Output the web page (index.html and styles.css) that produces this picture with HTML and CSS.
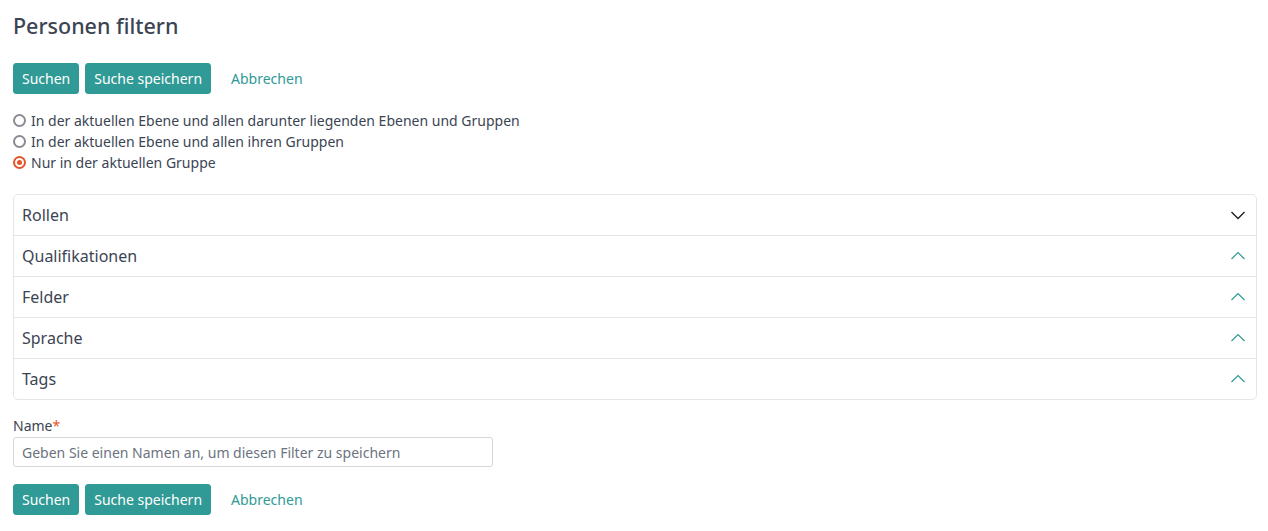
FILE: index.html
```html
<!DOCTYPE html>
<html lang="de">
<head>
<meta charset="utf-8">
<title>Personen filtern</title>
<link rel="stylesheet" href="styles.css">
</head>
<body>
<main class="page">
  <h1 class="title">Personen filtern</h1>
  <div class="actions">
    <button class="btn">Suchen</button>
    <button class="btn">Suche speichern</button>
    <a class="link" href="#">Abbrechen</a>
  </div>
  <div class="radios">
    <label class="radio"><span class="dot"></span>In der aktuellen Ebene und allen darunter liegenden Ebenen und Gruppen</label>
    <label class="radio"><span class="dot"></span>In der aktuellen Ebene und allen ihren Gruppen</label>
    <label class="radio"><span class="dot checked"></span>Nur in der aktuellen Gruppe</label>
  </div>
  <div class="accordion">
    <div class="acc-item"><span>Rollen</span>
      <svg class="chev dark" width="16" height="16" viewBox="0 0 16 16"><path d="M1.5 5 L8 11.5 L14.5 5" fill="none" stroke="currentColor" stroke-width="1.3"/></svg></div>
    <div class="acc-item"><span>Qualifikationen</span>
      <svg class="chev" width="16" height="16" viewBox="0 0 16 16"><path d="M1.5 11 L8 4.5 L14.5 11" fill="none" stroke="currentColor" stroke-width="1.2"/></svg></div>
    <div class="acc-item"><span>Felder</span>
      <svg class="chev" width="16" height="16" viewBox="0 0 16 16"><path d="M1.5 11 L8 4.5 L14.5 11" fill="none" stroke="currentColor" stroke-width="1.2"/></svg></div>
    <div class="acc-item"><span>Sprache</span>
      <svg class="chev" width="16" height="16" viewBox="0 0 16 16"><path d="M1.5 11 L8 4.5 L14.5 11" fill="none" stroke="currentColor" stroke-width="1.2"/></svg></div>
    <div class="acc-item"><span>Tags</span>
      <svg class="chev" width="16" height="16" viewBox="0 0 16 16"><path d="M1.5 11 L8 4.5 L14.5 11" fill="none" stroke="currentColor" stroke-width="1.2"/></svg></div>
  </div>
  <div class="field">
    <label class="label">Name<span class="req">*</span></label>
    <input class="input" type="text" placeholder="Geben Sie einen Namen an, um diesen Filter zu speichern">
  </div>
  <div class="actions bottom">
    <button class="btn">Suchen</button>
    <button class="btn">Suche speichern</button>
    <a class="link" href="#">Abbrechen</a>
  </div>
</main>
</body>
</html>
```
FILE: styles.css
```css
* { box-sizing: border-box; }
body {
  margin: 0;
  font-family: "Noto Sans", "Open Sans", sans-serif;
  font-size: 14px;
  color: #3b4453;
  background: #fff;
}
.page {
  padding: 0 11px 0 13px;
}
.title {
  margin: 0;
  padding-top: 11px;
  font-size: 21.5px;
  font-weight: 500;
  line-height: 30px;
  color: #3b4453;
}
.actions {
  display: flex;
  align-items: center;
  gap: 6px;
  margin-top: 22px;
}
.btn {
  font-family: inherit;
  font-size: 14px;
  line-height: 21px;
  padding: 4px 8px;
  border: 1px solid #309a96;
  background: #309a96;
  color: #fff;
  border-radius: 3px;
}
.link {
  margin-left: 14px;
  color: #2f9a96;
  text-decoration: none;
  line-height: 21px;
}
.radios {
  display: flex;
  flex-direction: column;
  margin-top: 16px;
}
.radio {
  display: flex;
  align-items: center;
  line-height: 21px;
  color: #3b4453;
}
.dot {
  width: 13px;
  height: 13px;
  border: 2px solid #8a8a93;
  border-radius: 50%;
  margin-right: 5px;
  flex: none;
}
.dot.checked {
  border-color: #e8542a;
  position: relative;
}
.dot.checked::after {
  content: "";
  position: absolute;
  left: 2px;
  top: 2px;
  width: 5px;
  height: 5px;
  border-radius: 50%;
  background: #e8542a;
}
.accordion {
  margin-top: 21px;
  border: 1px solid #e2e6ea;
  border-radius: 5px;
}
.acc-item {
  display: flex;
  align-items: center;
  justify-content: space-between;
  height: 40px;
  padding: 0 10px 0 8px;
  font-size: 16px;
  color: #3b4453;
}
.acc-item + .acc-item {
  border-top: 1px solid #e2e6ea;
  height: 41px;
}
.chev { color: #309a96; }
.chev.dark { color: #1b1b1b; }
.field {
  display: flex;
  flex-direction: column;
  margin-top: 16px;
}
.label {
  line-height: 20px;
  color: #3b4453;
}
.req { color: #e8542a; }
.input {
  width: 480px;
  height: 30px;
  margin-top: 1px;
  padding: 0 8px;
  font-family: inherit;
  font-size: 14px;
  border: 1px solid #d3d7db;
  border-radius: 3px;
  color: #3b4453;
}
.input::placeholder { color: #6c7380; }
.actions.bottom { margin-top: 17px; }
```
